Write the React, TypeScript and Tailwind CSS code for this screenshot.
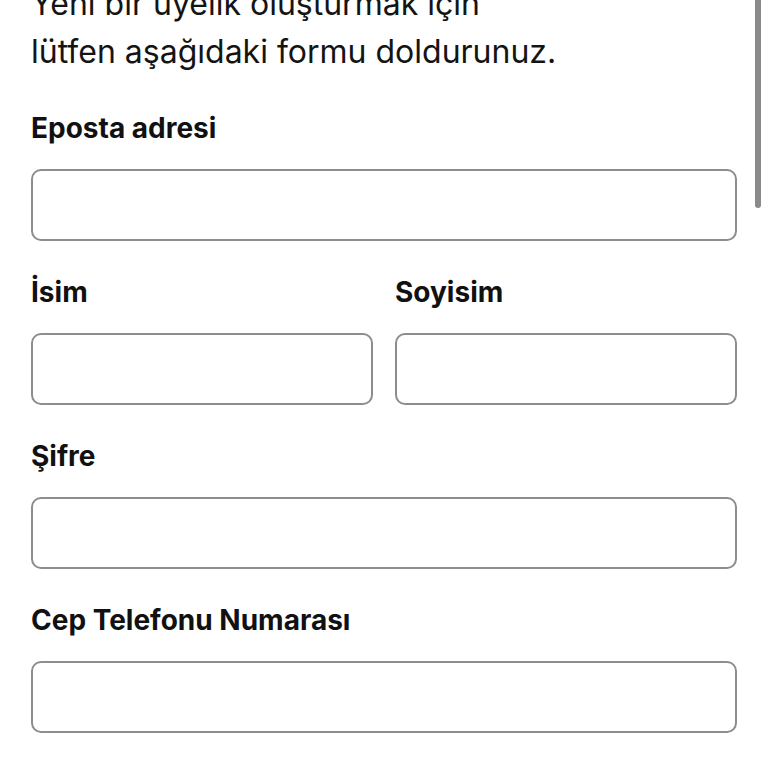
const fields = [
  { label: "Eposta adresi", type: "email" },
];

function Field({ label, type = "text" }: { label: string; type?: string }) {
  return (
    <div className="flex flex-col">
      <label className="mb-6 text-[28px] font-bold leading-[34px] text-[#111111]">{label}</label>
      <input
        type={type}
        className="h-[72px] w-full rounded-[10px] border-2 border-[#8d8d8d] bg-white px-4 text-[24px] outline-none"
      />
    </div>
  );
}

export default function App() {
  return (
    <div
      className="relative h-[768px] overflow-hidden bg-white"
      style={{ fontFamily: "Inter, 'Noto Sans', sans-serif" }}
    >
      <div className="absolute right-[7px] top-0 h-[208px] w-[6px] rounded-b-full bg-[#8a8a8a]" />
      <form className="flex flex-col gap-[34px] px-[31px]">
        <p className="-mt-[20px] mb-px text-[32px] leading-[48px] text-[#141414]">
          Yeni bir üyelik oluşturmak için
          <br />
          lütfen aşağıdaki formu doldurunuz.
        </p>
        {fields.map((f) => (
          <Field key={f.label} label={f.label} type={f.type} />
        ))}
        <div className="grid grid-cols-2 gap-[22px]">
          <Field label="İsim" />
          <Field label="Soyisim" />
        </div>
        <Field label="Şifre" type="password" />
        <Field label="Cep Telefonu Numarası" type="tel" />
        <Field label="Doğum Tarihi" />
      </form>
    </div>
  );
}
